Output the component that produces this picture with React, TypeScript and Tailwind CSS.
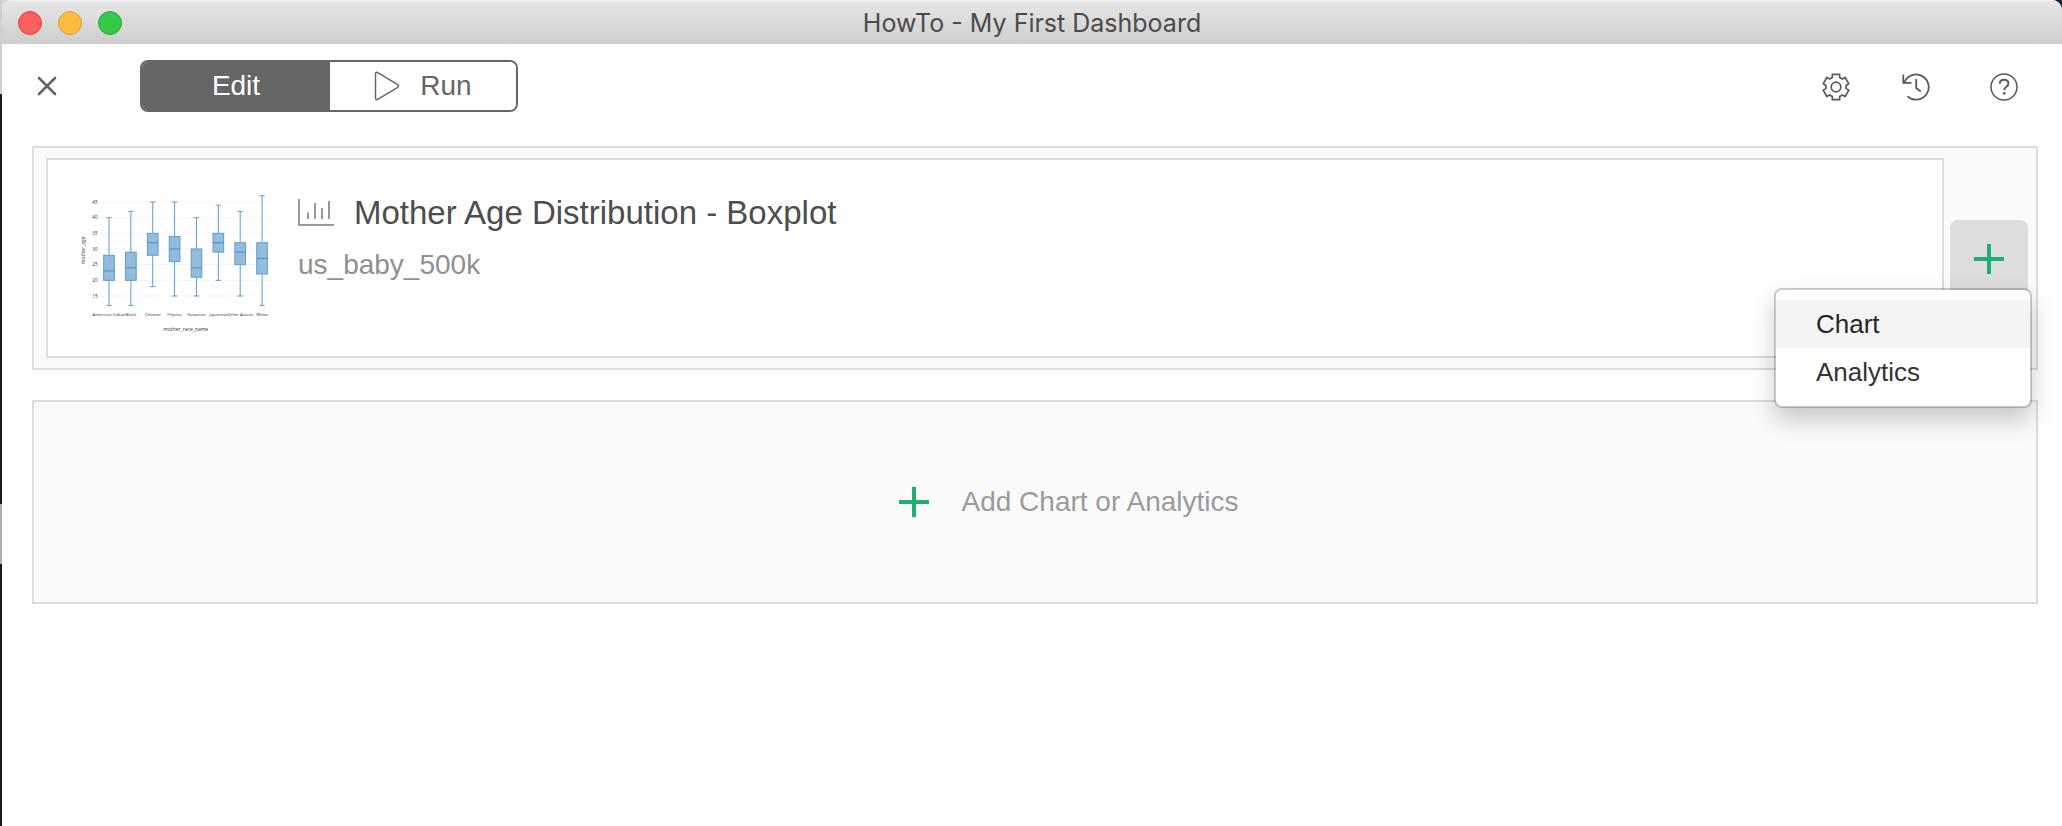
import React, { useState } from 'react'

type BoxStat = {
  label: string
  min: number
  q1: number
  median: number
  q3: number
  max: number
}

const STATS: BoxStat[] = [
  { label: 'American Indian', min: 12, q1: 20, median: 23, q3: 28, max: 40 },
  { label: 'Black', min: 12, q1: 20, median: 24, q3: 29, max: 42 },
  { label: 'Chinese', min: 18, q1: 28, median: 32, q3: 35, max: 45 },
  { label: 'Filipino', min: 15, q1: 26, median: 30, q3: 34, max: 45 },
  { label: 'Hawaiian', min: 15, q1: 21, median: 24, q3: 30, max: 40 },
  { label: 'Japanese', min: 20, q1: 29, median: 32, q3: 35, max: 44 },
  { label: 'Other Asians', min: 15, q1: 25, median: 29, q3: 32, max: 42 },
  { label: 'White', min: 12, q1: 22, median: 27, q3: 32, max: 47 },
]

const TICKS = [15, 20, 25, 30, 35, 40, 45]

// Chart units: three per screen pixel
const yOf = (age: number) => 348 - (age - 15) * 9.4
const xOf = (i: number) => 117 + i * 65.6

function BoxplotThumbnail() {
  return (
    <svg
      viewBox="0 0 660 510"
      className="h-[170px] w-[220px] shrink-0 font-['Open_Sans','Noto_Sans',sans-serif]"
      role="img"
      aria-label="Boxplot of mother_age by mother_race_name"
    >
      {TICKS.map((t) => (
        <g key={t}>
          <line x1="90" x2="610" y1={yOf(t)} y2={yOf(t)} stroke="#f4f4f4" strokeWidth="3" />
          <text x="83" y={yOf(t) + 5} textAnchor="end" fontSize="14" fill="#333">
            {t}
          </text>
        </g>
      ))}
      {STATS.map((s, i) => {
        const x = xOf(i)
        return (
          <g key={s.label} stroke="#5b9fcb" strokeWidth="3" fill="none">
            <path d={`M${x} ${yOf(s.max)}V${yOf(s.q3)}M${x} ${yOf(s.q1)}V${yOf(s.min)}`} />
            <path d={`M${x - 8} ${yOf(s.max)}h16M${x - 8} ${yOf(s.min)}h16`} />
            <rect x={x - 16} y={yOf(s.q3)} width="32" height={yOf(s.q1) - yOf(s.q3)} fill="#93bbdb" />
            <path d={`M${x - 16} ${yOf(s.median)}h32`} stroke="#4690c0" />
            <text x={x} y="409" textAnchor="middle" fontSize="13" fill="#333" stroke="none">
              {s.label}
            </text>
          </g>
        )
      })}
      <text x="347" y="452" textAnchor="middle" fontSize="15" fill="#333">
        mother_race_name
      </text>
      <text transform="translate(46 211) rotate(-90)" textAnchor="middle" fontSize="15" fill="#333">
        mother_age
      </text>
    </svg>
  )
}

function PlusIcon() {
  return (
    <svg viewBox="0 0 30 30" className="size-[30px]" stroke="#1fae70" strokeWidth="4" aria-hidden="true">
      <path d="M15 0v30M0 15h30" />
    </svg>
  )
}

function CloseIcon() {
  return (
    <svg viewBox="0 0 20 20" className="size-5" stroke="#666" strokeWidth="2.6" strokeLinecap="round" aria-hidden="true">
      <path d="M2 2l16 16M18 2L2 18" />
    </svg>
  )
}

function PlayIcon() {
  return (
    <svg viewBox="0 0 26 30" className="h-[30px] w-[26px]" fill="none" stroke="#666" strokeWidth="1.5" strokeLinejoin="round" aria-hidden="true">
      <path d="M1.500 3v24c0 1.600 1 2 2.200 1.300l20-12c1-.7 1-1.900 0-2.600l-20-12c-1.200-.7-2.200-.3-2.200 1.300z" />
    </svg>
  )
}

// Six teeth, the first pointing straight up
const GEAR_POINTS = [0, 60, 120, 180, 240, 300]
  .flatMap((tooth) => [
    [tooth - 21, 10.2],
    [tooth - 16, 13.2],
    [tooth + 16, 13.2],
    [tooth + 21, 10.2],
  ])
  .map(([deg, r]) => {
    const a = (deg * Math.PI) / 180
    return `${(14 + r * Math.sin(a)).toFixed(2)},${(14 - r * Math.cos(a)).toFixed(2)}`
  })
  .join(' ')

function GearIcon() {
  return (
    <svg viewBox="0 0 28 28" className="size-7" fill="none" stroke="#5a5a5a" strokeWidth="1.7" strokeLinejoin="round" aria-hidden="true">
      <polygon points={GEAR_POINTS} />
      <circle cx="14" cy="14" r="4.8" />
    </svg>
  )
}

function HistoryIcon() {
  return (
    <svg viewBox="0 0 28 28" className="size-7" fill="none" stroke="#5a5a5a" strokeWidth="1.8" aria-hidden="true">
      <path d="M2.500 9.200A12.600 12.600 0 1 1 5.500 23.300" />
      <path d="M1.300 1.500v8.300h8.200M14.200 6v9l4.600 3.500" />
    </svg>
  )
}

function HelpIcon() {
  return (
    <svg viewBox="0 0 28 28" className="size-7" fill="none" stroke="#5a5a5a" strokeWidth="1.5" aria-hidden="true">
      <circle cx="14" cy="14" r="13" />
      <path d="M9.800 10.800c0-2.600 1.800-4 4.300-4s4.300 1.400 4.300 3.700c0 3.300-4.200 3.200-4.200 6.700" strokeWidth="2" />
      <circle cx="14.200" cy="20.300" r="1.400" fill="#5a5a5a" stroke="none" />
    </svg>
  )
}

function ChartIcon() {
  return (
    <svg viewBox="0 0 36 28" className="h-7 w-9" fill="none" stroke="#999" aria-hidden="true">
      <path d="M1 0v26h35" strokeWidth="2" />
      <path d="M10 13.500V20M17 4V20M24 9V20M31 2V20" strokeWidth="2" />
    </svg>
  )
}

function TitleBar() {
  return (
    <header className="flex h-11 items-center border-t border-[#f2f2f2] bg-linear-to-b from-[#e6e6e6] to-[#cecece] px-4">
      <div className="flex flex-1 gap-4">
        <button aria-label="Close window" className="size-6 rounded-full border border-[#e0443e] bg-[#fc605c]" />
        <button aria-label="Minimize window" className="size-6 rounded-full border border-[#dea034] bg-[#fdbc40]" />
        <button aria-label="Zoom window" className="size-6 rounded-full border border-[#27aa35] bg-[#34c84a]" />
      </div>
      <h1 className="font-['Inter',sans-serif] text-[25px] leading-8 text-[#4b4b4b]">HowTo - My First Dashboard</h1>
      <div className="flex-1" />
    </header>
  )
}

function Toolbar() {
  const [mode, setMode] = useState<'edit' | 'run'>('edit')

  return (
    <div className="flex items-center justify-between pt-4 pr-11 pl-[35px]">
      <div className="flex items-center">
        <button aria-label="Close">
          <CloseIcon />
        </button>
        <div className="ml-[83px] flex h-[52px] w-[378px] overflow-hidden rounded-lg border-2 border-[#666] text-[28px] leading-8">
          <button
            onClick={() => setMode('edit')}
            aria-pressed={mode === 'edit'}
            className="w-[188px] bg-[#666] text-white"
          >
            Edit
          </button>
          <button
            onClick={() => setMode('run')}
            aria-pressed={mode === 'run'}
            className="flex flex-1 items-center justify-center gap-5 bg-white text-[#666]"
          >
            <PlayIcon />
            Run
          </button>
        </div>
      </div>
      <div className="flex items-center pt-0.5">
        <button aria-label="Settings">
          <GearIcon />
        </button>
        <button aria-label="History" className="ml-[52px]">
          <HistoryIcon />
        </button>
        <button aria-label="Help" className="ml-[60px]">
          <HelpIcon />
        </button>
      </div>
    </div>
  )
}

function AddMenu() {
  return (
    <div
      role="menu"
      className="absolute top-[70px] -right-1 z-10 w-[258px] rounded-lg border-2 border-black/20 bg-white bg-clip-padding py-2.5 text-[26px] leading-8 text-[#333] shadow-[0_12px_24px_rgba(0,0,0,0.2)]"
    >
      <button role="menuitem" className="block h-12 w-full bg-[#f4f4f4] pl-10 text-left text-[#262626]">
        Chart
      </button>
      <button role="menuitem" className="block h-12 w-full pl-10 text-left">
        Analytics
      </button>
    </div>
  )
}

function ChartRow() {
  const [open, setOpen] = useState(true)

  return (
    <section className="flex items-center border-2 border-[#ddd] bg-[#fafafa] py-2.5 pr-2 pl-3">
      <article className="flex h-[200px] flex-1 border-2 border-[#ddd] bg-white pt-5 pl-[22px]">
        <BoxplotThumbnail />
        <div className="ml-2 pt-[13px]">
          <div className="flex items-center gap-5">
            <ChartIcon />
            <h2 className="text-[33px] leading-10 text-[#4d4d4d]">Mother Age Distribution - Boxplot</h2>
          </div>
          <p className="mt-3 text-[28px] leading-10 text-[#909090]">us_baby_500k</p>
        </div>
      </article>
      <div className="relative ml-1.5 pt-0.5">
        <button
          onClick={() => setOpen(!open)}
          aria-label="Add to row"
          aria-expanded={open}
          className="flex size-[78px] items-center justify-center rounded-lg bg-[#ddd]"
        >
          <PlusIcon />
        </button>
        {open && <AddMenu />}
      </div>
    </section>
  )
}

export default function App() {
  return (
    <div className="flex min-h-screen bg-[#16233d] font-['Liberation_Sans',Arial,sans-serif]">
      {/* Sliver of the window behind */}
      <div className="flex w-[2px] flex-col bg-[#1a1a1a]">
        <div className="h-[94px] bg-[#d0d0d0]" />
        <div className="mt-[410px] h-[60px] bg-[#b0b0b0]" />
      </div>
      <div className="flex-1 bg-linear-to-r from-[#d8d8d8] from-50% to-[#16233d] to-50%">
        <div className="min-h-full overflow-hidden rounded-t-[10px] bg-white">
          <TitleBar />
          <Toolbar />
          <main className="flex flex-col gap-[30px] pt-[34px] pr-6 pl-[30px]">
            <ChartRow />
            <button className="flex h-[204px] items-center justify-center gap-8 border-2 border-[#ddd] bg-[#fafafa] pl-[68px] text-[28px] leading-8 text-[#9b9b9b]">
              <PlusIcon />
              Add Chart or Analytics
            </button>
          </main>
        </div>
      </div>
    </div>
  )
}
